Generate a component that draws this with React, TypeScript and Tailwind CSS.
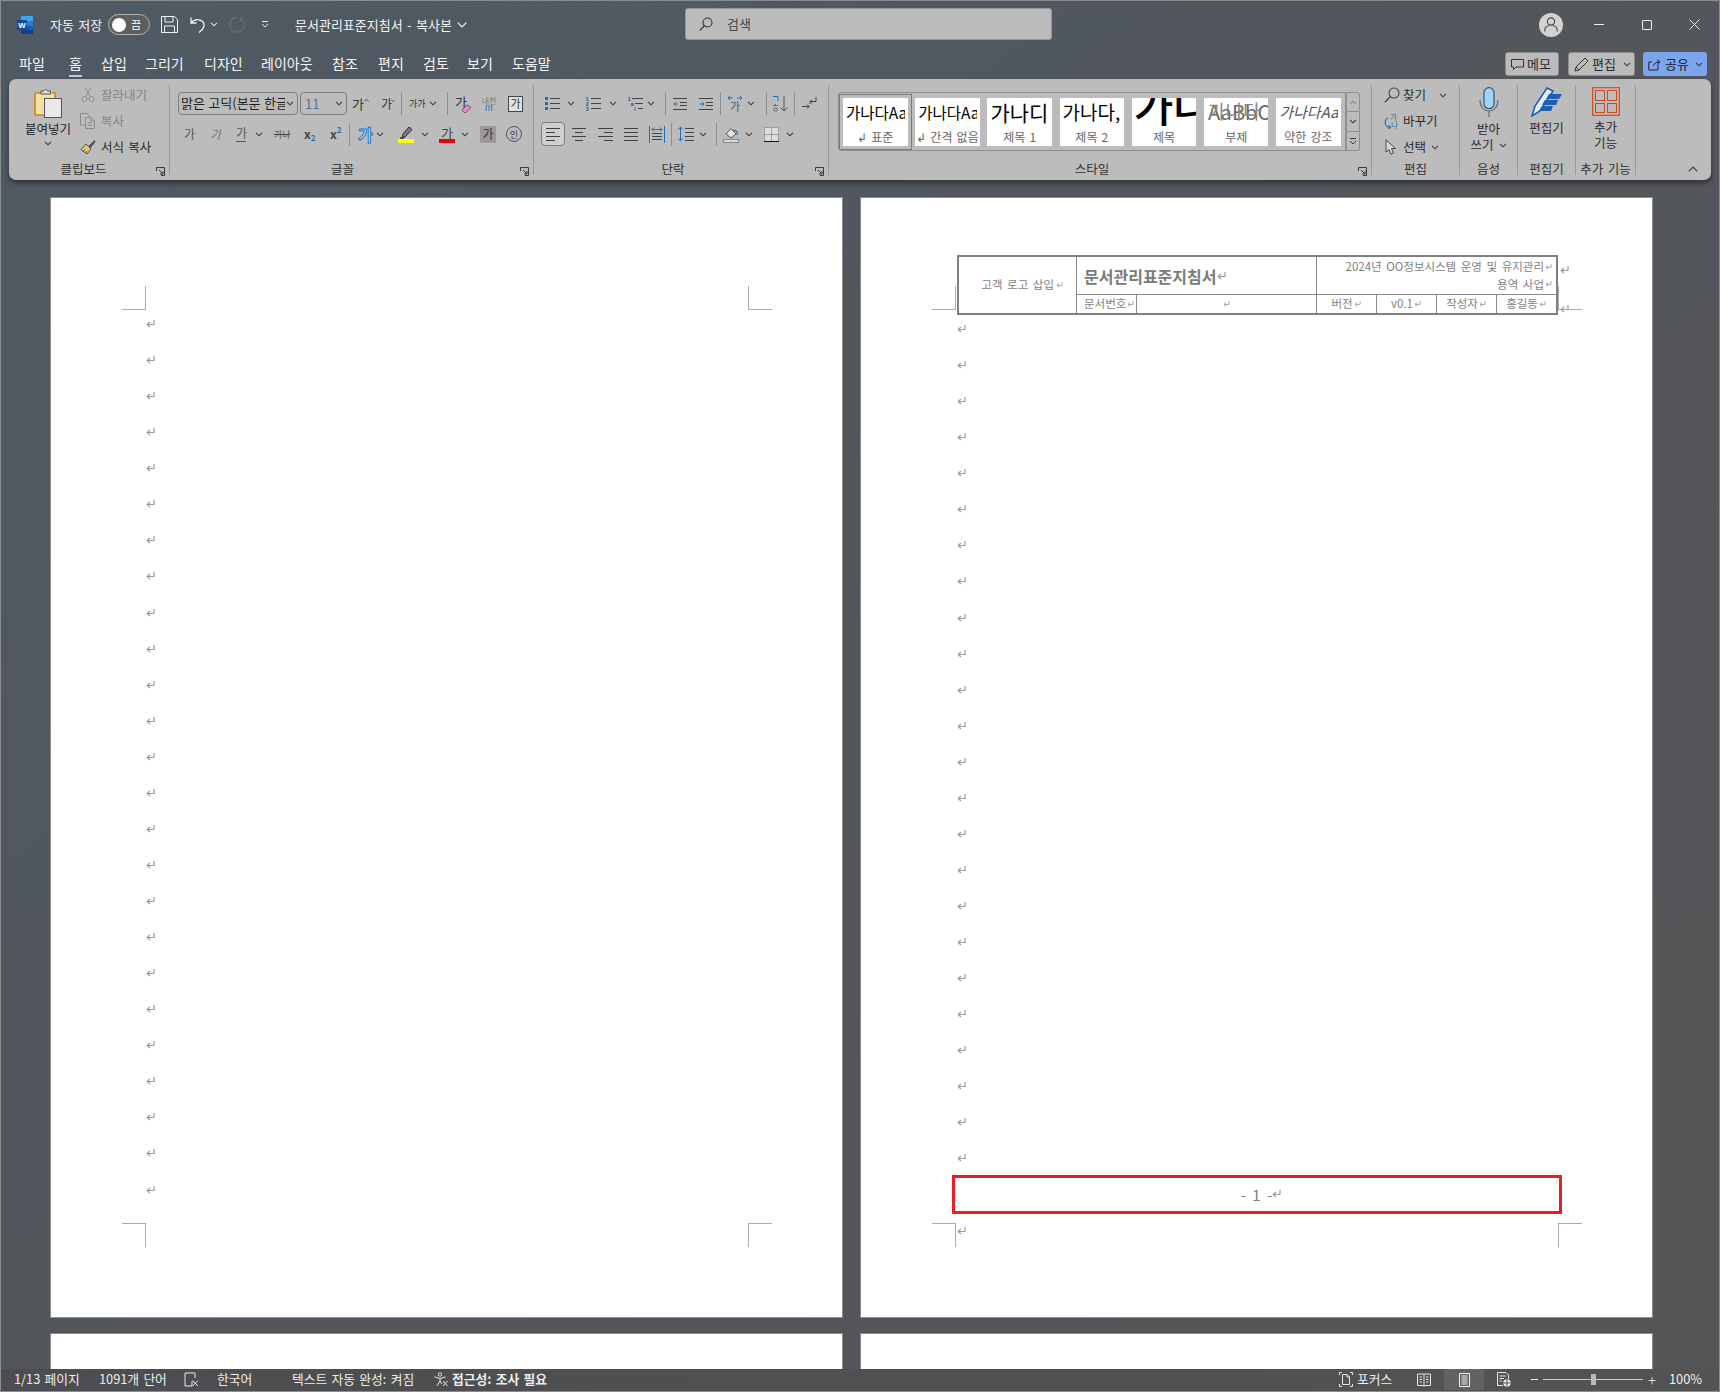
import React from "react";

type P = { c?: string };
const Svg = ({ w, h, c = "", children }: { w: number; h: number; c?: string; children: React.ReactNode }) => (
  <svg width={w} height={h} viewBox={`0 0 ${w} ${h}`} fill="none" className={`shrink-0 ${c}`}>{children}</svg>
);
const Chev = ({ c = "" }: P) => (
  <Svg w={8} h={5} c={c}><path d="M1 .8l3 3 3-3" stroke="#3a3a3a" strokeWidth="1.1" /></Svg>
);
const Sep = ({ c = "" }: P) => <div className={`w-px h-[23px] bg-[#8f8f8f] shrink-0 ${c}`} />;
const GSep = () => <div className="w-px h-[90px] self-center bg-[#999999] shrink-0" />;
const Launcher = () => (
  <svg width="9" height="9" viewBox="0 0 9 9" fill="none" className="absolute right-[4px] bottom-[4px]">
    <path d="M.5 4V.5H8.5V8.5H5M3 3l4 4M7 4v3H4" stroke="#3a3a3a" strokeWidth="1" />
  </svg>
);
const Mark = ({ c = "" }: P) => (
  <svg width="9" height="8" viewBox="0 0 9 8" fill="none" className={`shrink-0 ${c}`}>
    <path d="M8 0v4.5H1.5M4 2L1.2 4.5 4 7" stroke="#9c9c9c" strokeWidth="1.2" />
  </svg>
);
const Lines = ({ ys, w = 16, h = 16, col = "#3f3f3f", c = "" }: { ys: [number, number, number][]; w?: number; h?: number; col?: string; c?: string }) => (
  <Svg w={w} h={h} c={c}>
    {ys.map((y, i) => <path key={i} d={`M${y[1]} ${y[0] + 0.5}H${y[2]}`} stroke={col} />)}
  </Svg>
);

function TitleBar() {
  return (
    <div className="h-[49px] flex items-center text-[13px] text-[#f4f4f4] shrink-0">
      <svg width="16" height="18" viewBox="0 0 16 18" className="ml-[17px] shrink-0">
        <rect x="4" y="0" width="12" height="18" rx="1" fill="#41a5ee" />
        <rect x="4" y="5" width="12" height="4.5" fill="#2b7cd3" />
        <rect x="4" y="9.5" width="12" height="4.5" fill="#185abd" />
        <rect x="4" y="14" width="12" height="4" fill="#103f91" />
        <rect x="0" y="4" width="10" height="10" rx="1" fill="#134a9e" />
        <text x="5" y="12" textAnchor="middle" fontSize="8" fontWeight="700" fill="#fff" fontFamily="Liberation Sans">W</text>
      </svg>
      <div className="ml-[17px] w-[50px] whitespace-nowrap">자동 저장</div>
      <div className="ml-[8px] w-[42px] h-[21px] rounded-full border border-[#b4b4b4] bg-[#5e5e5e] flex items-center justify-between pl-[3px] pr-[8px] shrink-0">
        <div className="w-[14px] h-[14px] rounded-full bg-white" />
        <span className="text-[11px] leading-none text-white">끔</span>
      </div>
      <Svg w={17} h={17} c="ml-[11px]">
        <path d="M.5.5H13.5L16.5 3.5V16.5H.5z M4 .5V6H12V.5 M3.5 16.5V10H13.5V16.5" stroke="#f0f0f0" strokeWidth="1" />
      </Svg>
      <Svg w={16} h={17} c="ml-[12px]">
        <path d="M1 1.5V7H6.5 M1.2 6.5C4 3.5 9 2.5 12.5 5.5C15.5 8.5 14 13 9 16.5" stroke="#f0f0f0" strokeWidth="1.3" />
      </Svg>
      <svg width="8" height="5" viewBox="0 0 8 5" fill="none" className="ml-[4px] shrink-0"><path d="M1 .8l3 3 3-3" stroke="#e8e8e8" strokeWidth="1.1" /></svg>
      <Svg w={16} h={17} c="ml-[11px]">
        <path d="M8 1.5C3.5 1.5.8 5 .8 9a7.2 7.2 0 0 0 14.4 0C15.2 6 14 4 11.5 2.5M11.5 1v4" stroke="#6a6f74" strokeWidth="1.2" />
      </Svg>
      <svg width="8" height="7" viewBox="0 0 8 7" fill="none" className="ml-[16px] shrink-0"><path d="M1 .5h6M1 3l3 3 3-3" stroke="#e8e8e8" strokeWidth="1" /></svg>
      <div className="ml-[26px] w-[157px] whitespace-nowrap">문서관리표준지침서 - 복사본</div>
      <svg width="10" height="6" viewBox="0 0 10 6" fill="none" className="ml-[5px] shrink-0"><path d="M.7.7L5 5l4.3-4.3" stroke="#f0f0f0" strokeWidth="1.2" /></svg>
      <div className="ml-[218px] w-[367px] h-[32px] -mt-[2px] rounded-[3px] border border-[#969696] bg-[#bbbbbb] flex items-center pl-[13px] shrink-0">
        <Svg w={14} h={14}>
          <circle cx="8.5" cy="5.5" r="4.5" stroke="#333" strokeWidth="1.1" />
          <path d="M5.2 9L.7 13.4" stroke="#333" strokeWidth="1.2" />
        </Svg>
        <span className="ml-[14px] text-[13px] text-[#444444]">검색</span>
      </div>
      <div className="ml-[487px] w-[24px] h-[24px] rounded-full bg-[#d2d2d2] flex items-center justify-center shrink-0">
        <Svg w={14} h={15}>
          <circle cx="7" cy="4.5" r="3.6" stroke="#444" strokeWidth="1.1" />
          <path d="M.8 14.5V13C1 10.5 3 9 5 8.8M13.2 14.5V13C13 10.5 11 9 9 8.8" stroke="#444" strokeWidth="1.1" />
        </Svg>
      </div>
      <div className="ml-[31px] w-[10px] h-px bg-[#f0f0f0] shrink-0" />
      <div className="ml-[38px] w-[10px] h-[10px] border border-[#f0f0f0] rounded-[1px] shrink-0" />
      <Svg w={11} h={11} c="ml-[37px]"><path d="M.5.5l10 10M10.5.5l-10 10" stroke="#f0f0f0" /></Svg>
    </div>
  );
}

function Tabs() {
  const btn = "h-[24px] rounded-[3px] border border-[#8f8f8f] bg-[#bbbbbb] flex items-center text-[13px] text-[#2b2b2b] shrink-0";
  return (
    <div className="h-[30px] flex items-start pt-[4px] text-[14px] leading-[20px] text-[#f6f6f6] shrink-0">
      <span className="ml-[19px] w-[25px] whitespace-nowrap">파일</span>
      <span className="ml-[25px] h-[24px] border-b-2 border-[#b7cbee] w-[13px] whitespace-nowrap">홈</span>
      <span className="ml-[19px] w-[25px] whitespace-nowrap">삽입</span>
      <span className="ml-[19px] w-[39px] whitespace-nowrap">그리기</span>
      <span className="ml-[20px] w-[38px] whitespace-nowrap">디자인</span>
      <span className="ml-[19px] w-[52px] whitespace-nowrap">레이아웃</span>
      <span className="ml-[19px] w-[26px] whitespace-nowrap">참조</span>
      <span className="ml-[20px] w-[25px] whitespace-nowrap">편지</span>
      <span className="ml-[20px] w-[25px] whitespace-nowrap">검토</span>
      <span className="ml-[19px] w-[25px] whitespace-nowrap">보기</span>
      <span className="ml-[20px] w-[38px] whitespace-nowrap">도움말</span>
      <div className={`ml-[955px] -mt-[1px] w-[54px] pl-[5px] ${btn}`}>
        <Svg w={13} h={13}><path d="M.5 1.5H12.5V9H5L2.5 11.5V9H.5z" stroke="#333" /></Svg>
        <span className="ml-[3px]">메모</span>
      </div>
      <div className={`ml-[9px] -mt-[1px] w-[67px] pl-[5px] ${btn}`}>
        <Svg w={15} h={15}><path d="M1 14l1-4L11 1l3 3-9 9zM2 10l3 3" stroke="#333" /></Svg>
        <span className="ml-[3px]">편집</span>
        <Chev c="ml-[7px]" />
      </div>
      <div className="ml-[8px] -mt-[1px] w-[64px] h-[24px] rounded-[3px] bg-[#7ba6ee] flex items-center pl-[5px] text-[13px] text-[#1c1c1c] shrink-0">
        <Svg w={13} h={13}><path d="M10 6.5V12H.8V4H4M5.5 8C6 5.5 8 4 11 4M9 1.5L12 4 9 6.5" stroke="#222" /></Svg>
        <span className="ml-[4px]">공유</span>
        <Chev c="ml-[6px]" />
      </div>
    </div>
  );
}

const SmallRow = ({ icon, text, dim, after }: { icon: React.ReactNode; text: string; dim?: boolean; after?: React.ReactNode }) => (
  <div className="h-[26px] flex items-center">
    {icon}
    <span className={`whitespace-nowrap ${dim ? "text-[#858585]" : "text-[#2b2b2b]"}`}>{text}</span>
    {after}
  </div>
);

function Group({ w, label, launcher, lp = "", children }: { w: string; label: string; launcher?: boolean; lp?: string; children: React.ReactNode }) {
  return (
    <div className={`relative flex flex-col shrink-0 ${w}`}>
      <div className="h-[81px]">{children}</div>
      <div className={`h-[18px] flex items-center justify-center text-[12.5px] leading-none text-[#303030] whitespace-nowrap ${lp}`}>{label}</div>
      {launcher && <Launcher />}
    </div>
  );
}

function Clipboard() {
  return (
    <div className="flex">
      <div className="w-[71px] pl-[7px] flex flex-col items-center">
        <svg width="28" height="30" viewBox="0 0 28 30" fill="none" className="mt-[9px] shrink-0">
          <path d="M1 5H8M18 5H21V27H1V5" stroke="#c98a17" strokeWidth="1.6" fill="#f6dfa6" />
          <path d="M7 6V3H10C10.5 1 13 1 13.5 3H16.5V6z" fill="#dfdfdf" stroke="#555" />
          <rect x="10.5" y="10.5" width="17" height="19" fill="#e9e9e9" stroke="#555" />
        </svg>
        <div className="mt-[3px] h-[16px] leading-[16px] whitespace-nowrap text-[#222222]">붙여넣기</div>
        <Chev c="mt-[4px]" />
      </div>
      <div className="pt-[3px]">
        <SmallRow dim text="잘라내기" icon={
          <Svg w={16} h={16} c="mr-[5px]">
            <path d="M5 .5L10 9M11 .5L6 9" stroke="#8c8c8c" />
            <circle cx="4.5" cy="12" r="2.5" stroke="#8c8c8c" /><circle cx="11.5" cy="12" r="2.5" stroke="#8c8c8c" />
          </Svg>} />
        <SmallRow dim text="복사" icon={
          <Svg w={16} h={16} c="mr-[5px]">
            <path d="M.5.5H7L9 3V4M.5.5V12H5M5.5 4.5H11L14.5 8V15.5H5.5zM11 4.5V8H14.5M7.5 10H12M7.5 12.5H12" stroke="#8c8c8c" />
          </Svg>} />
        <SmallRow text="서식 복사" icon={
          <Svg w={16} h={16} c="mr-[5px]">
            <path d="M9 7L14.5 1.5L15 3L10.5 8.5z" fill="#555" stroke="#333" strokeWidth=".6" />
            <path d="M6 5L11 10L7 15L1 10.5z" fill="#e8c56d" stroke="#555" />
            <path d="M3 12.5l2-2M5.5 14l1.5-2" stroke="#555" />
          </Svg>} />
      </div>
    </div>
  );
}

function FontGroup() {
  return (
    <div className="pt-[13px] text-[#333333]">
      <div className="h-[23px] flex items-center">
        <div className="ml-[8px] w-[120px] h-[23px] rounded-[4px] border border-[#7d7d7d] flex items-center pl-[2px] pr-[3px] pb-[2px] shrink-0">
          <span className="flex-1 overflow-hidden whitespace-nowrap text-[13px] leading-[16px] text-[#1f1f1f] [word-spacing:0.5px]">맑은 고딕(본문 한글</span>
          <Chev c="ml-[1px] mt-[2px]" />
        </div>
        <div className="ml-[2px] w-[47px] h-[23px] rounded-[4px] border border-[#7d7d7d] flex items-center justify-between pl-[4px] pr-[3px] shrink-0">
          <span className="text-[13px] leading-none text-[#55748f]">11</span>
          <Chev />
        </div>
        <div className="ml-[5px] w-[17px] flex items-start shrink-0 text-[13px] leading-none">
          가<svg width="5" height="4" viewBox="0 0 5 4" fill="none" className="mt-px"><path d="M.5 3.5l2-2.5 2 2.5" stroke="#1f6fb5" /></svg>
        </div>
        <div className="ml-[12px] w-[14px] flex items-start shrink-0 text-[12px] leading-none">
          가<svg width="5" height="4" viewBox="0 0 5 4" fill="none" className="mt-px -ml-[1px]"><path d="M.5.5l2 2.5 2-2.5" stroke="#1f6fb5" /></svg>
        </div>
        <Sep c="ml-[6px]" />
        <div className="ml-[7px] w-[16px] text-[9px] leading-none whitespace-nowrap shrink-0">가가</div>
        <Chev c="ml-[4px]" />
        <Sep c="ml-[10px]" />
        <div className="ml-[7px] w-[17px] h-[18px] relative shrink-0 text-[13px] leading-none">
          가
          <svg width="11" height="9" viewBox="0 0 11 9" className="absolute right-0 bottom-0"><path d="M1 6L6 1L10 3.5L5 8.5H3z" fill="#e28fc2" stroke="#a23d83" /></svg>
        </div>
        <div className="ml-[9px] w-[16px] shrink-0 flex flex-col items-center text-[8px] leading-[9px] text-[#777777]">
          <span className="whitespace-nowrap">내천</span>
          <svg width="8" height="7" viewBox="0 0 8 7"><path d="M1.5 0L1 6M4 0v6M6.5 0L7 6" stroke="#2b78c2" /></svg>
        </div>
        <div className="ml-[11px] w-[15px] h-[16px] border border-[#444444] flex items-center justify-center text-[11px] leading-none bg-[#e2e2e2] shrink-0">가</div>
      </div>
      <div className="mt-[7px] h-[24px] flex items-center text-[12px] leading-none text-[#555555]">
        <span className="ml-[14px] w-[10px] shrink-0">가</span>
        <span className="ml-[16px] w-[9px] shrink-0 text-[#777777] italic">가</span>
        <span className="ml-[17px] w-[10px] shrink-0 border-b border-[#555555] pb-[2px]">가</span>
        <Chev c="ml-[9px]" />
        <span className="ml-[11px] w-[16px] shrink-0 text-[9px] relative whitespace-nowrap">
          가나
          <span className="absolute left-0 right-0 top-[4px] h-px bg-[#444444]" />
        </span>
        <span className="ml-[14px] w-[12px] shrink-0 font-bold text-[#444444] text-[12px] flex items-end">x<span className="text-[8px] text-[#1f6fb5] -mb-[2px]">2</span></span>
        <span className="ml-[14px] w-[11px] shrink-0 font-bold text-[#444444] text-[12px] flex items-start">x<span className="text-[8px] text-[#1f6fb5] -mt-[2px]">2</span></span>
        <Sep c="ml-[8px]" />
        <span className="ml-[8px] w-[14px] shrink-0 text-[16px] font-bold text-[#dbeaf8] [-webkit-text-stroke:1px_#1f6fb5]">가</span>
        <Chev c="ml-[4px]" />
        <div className="ml-[14px] w-[16px] shrink-0 flex flex-col items-center">
          <svg width="14" height="13" viewBox="0 0 14 13" fill="none"><path d="M10 1L13 3.5L6 11H3.5V8.5z" fill="#777777" stroke="#333" /><path d="M1 12H5" stroke="#222" strokeWidth="1.4" /></svg>
          <div className="w-[16px] h-[4px] bg-[#ffff00]" />
        </div>
        <Chev c="ml-[7px]" />
        <div className="ml-[10px] w-[16px] shrink-0 flex flex-col items-center">
          <span className="text-[13px] text-[#444444] h-[13px]">가</span>
          <div className="w-[16px] h-[4px] bg-[#f00000]" />
        </div>
        <Chev c="ml-[6px]" />
        <div className="ml-[11px] w-[16px] h-[17px] bg-[#999999] flex items-center justify-center text-[12px] text-[#333333] shrink-0">가</div>
        <div className="ml-[10px] w-[16px] h-[16px] rounded-full border border-[#555555] flex items-center justify-center text-[9px] text-[#444444] shrink-0">인</div>
      </div>
    </div>
  );
}

const sq = "#1f6fb5";
const dig = { fontSize: 6, fontWeight: 700, fill: "#1a5f9e", fontFamily: "Liberation Sans" };
function ParaGroup() {
  return (
    <div className="pt-[13px]">
      <div className="h-[23px] flex items-center">
        <Svg w={15} h={15} c="ml-[11px]">
          <rect y="1" width="3" height="3" fill={sq} /><rect y="6" width="3" height="3" fill={sq} /><rect y="11" width="3" height="3" fill={sq} />
          <path d="M5 2.5H15M5 7.5H15M5 12.5H15" stroke="#444" />
        </Svg>
        <Chev c="ml-[7px]" />
        <svg width="16" height="15" viewBox="0 0 16 15" fill="none" className="ml-[10px] shrink-0">
          <path d="M6 2.5H16M6 7.5H16M6 12.5H16" stroke="#444" />
          <text x="0.5" y="5" {...dig}>1</text><text x="0.5" y="10" {...dig}>2</text><text x="0.5" y="15" {...dig}>3</text>
        </svg>
        <Chev c="ml-[8px]" />
        <svg width="16" height="15" viewBox="0 0 16 15" fill="none" className="ml-[10px] shrink-0">
          <path d="M5 2.5H16M8 7.5H16M11 12.5H16" stroke="#444" />
          <text x="0.5" y="5" {...dig}>1</text><text x="3.5" y="10" {...dig}>a</text><text x="7" y="15" {...dig}>i</text>
        </svg>
        <Chev c="ml-[4px]" />
        <Sep c="ml-[10px]" />
        <Svg w={14} h={15} c="ml-[7px]">
          <path d="M0 2.5H14M7 6.5H14M7 9.5H14M0 13.5H14" stroke="#444" />
          <path d="M5 8H.8M3 6L.8 8 3 10" stroke={sq} />
        </Svg>
        <Svg w={14} h={15} c="ml-[12px]">
          <path d="M0 2.5H14M7 6.5H14M7 9.5H14M0 13.5H14" stroke="#444" />
          <path d="M.5 8H5M3 6L5.2 8 3 10" stroke={sq} />
        </Svg>
        <Sep c="ml-[7px]" />
        <div className="ml-[6px] w-[16px] flex flex-col items-center shrink-0">
          <svg width="16" height="6" viewBox="0 0 16 6" fill="none"><path d="M6 3H1M3 1L1 3l2 2M10 3h5M13 1l2 2-2 2" stroke={sq} /></svg>
          <span className="text-[11px] leading-[11px] text-[#555555]">가</span>
        </div>
        <Chev c="ml-[4px]" />
        <Sep c="ml-[11px]" />
        <svg width="17" height="17" viewBox="0 0 17 17" fill="none" className="ml-[5px] shrink-0">
          <path d="M1 1.5H6V6" stroke={sq} />
          <path d="M1 10.5H6M3.5 9V11M1.5 14.5a2 1.6 0 1 0 4 0a2 1.6 0 1 0-4 0" stroke="#555" strokeWidth=".8" />
          <path d="M12 1V16M8.5 12.5L12 16l3.5-3.5" stroke="#555" />
        </svg>
        <Sep c="ml-[5px]" />
        <Svg w={16} h={16} c="ml-[6px]">
          <path d="M15 1V5.5H9M11 3.5L9 5.5l2 2" stroke="#444" />
          <path d="M1 10.5H8M6 8.5l2 2-2 2M8 8l3-3" stroke="#444" />
        </Svg>
      </div>
      <div className="mt-[7px] h-[24px] flex items-center">
        <div className="ml-[7px] w-[24px] h-[24px] rounded-[4px] border border-[#7f7f7f] bg-[#d0d0d0] flex items-center justify-center shrink-0">
          <Lines ys={[[1, 0, 14], [5, 0, 9], [9, 0, 14], [13, 0, 9]]} w={14} h={15} />
        </div>
        <Lines c="ml-[7px]" ys={[[1, 0, 14], [5, 3, 11], [9, 0, 14], [13, 3, 11]]} w={14} h={15} />
        <Lines c="ml-[12px]" ys={[[1, 0, 15], [5, 6, 15], [9, 0, 15], [13, 6, 15]]} w={15} h={15} />
        <Lines c="ml-[11px]" ys={[[1, 0, 14], [5, 0, 14], [9, 0, 14], [13, 0, 14]]} w={14} h={15} />
        <Svg w={16} h={17} c="ml-[11px]">
          <path d="M.5 0V17M15.5 0V17" stroke={sq} />
          <path d="M3 3.5H13M5 1.5L3 3.5l2 2M11 1.5l2 2-2 2" stroke={sq} />
          <path d="M3 7.5H13M3 10.5H13M3 13.5H13" stroke="#444" />
        </Svg>
        <Sep c="ml-[6px]" />
        <Svg w={16} h={16} c="ml-[6px]">
          <path d="M7 2.5H16M7 6.5H16M7 10.5H16M7 14.5H16" stroke="#444" />
          <path d="M2.5 1V15M.5 3.5l2-2.5 2 2.5M.5 12.5l2 2.5 2-2.5" stroke={sq} />
        </Svg>
        <Chev c="ml-[5px]" />
        <Sep c="ml-[9px]" />
        <Svg w={16} h={17} c="ml-[6px]">
          <path d="M3 8L8 2.5L13 8L8 12z" stroke="#555" fill="#e4e4e4" />
          <path d="M10 5a2.5 2.5 0 0 1 4 1c.6 1.5.3 2 0 3" stroke={sq} strokeWidth="1.2" />
          <rect x=".5" y="13.5" width="15" height="3" fill="#dadada" stroke="#8a8a8a" />
        </Svg>
        <Chev c="ml-[6px]" />
        <Svg w={15} h={15} c="ml-[11px]">
          <rect width="15" height="14" fill="#dcdcdc" />
          <path d="M.5.5H14.5M.5.5V14M14.5.5V14M7.5.5V14M.5 7.5H14.5" stroke="#666" strokeDasharray="1 1" />
          <path d="M0 14.5H15" stroke="#111" />
        </Svg>
        <Chev c="ml-[7px]" />
      </div>
    </div>
  );
}

function Tile({ label, first, children }: { label: string; first?: boolean; children: React.ReactNode }) {
  return (
    <div className={`w-[64.5px] h-[48px] bg-white flex flex-col overflow-hidden shrink-0 ${first ? "outline-1 outline-offset-[3px] outline-[#7a7a7a]" : ""}`}>
      <div className="h-[28px] relative overflow-hidden flex items-center">{children}</div>
      <div className="h-[20px] pt-[3px] flex items-center justify-center text-[12px] leading-none text-[#666666] whitespace-nowrap">{label}</div>
    </div>
  );
}
const sampleBox = "block w-[59px] ml-[3px] overflow-hidden whitespace-nowrap";
const styleBtn = "w-[14px] border border-[#8f8f8f] flex items-center justify-center";
function Styles() {
  return (
    <div className="ml-[9px] mt-[13px] flex h-[59px] w-[522px]">
      <div className="w-[508px] h-full rounded-l-[3px] border border-[#8f8f8f] flex gap-[7.7px] items-center pl-[4px] overflow-hidden">
        <Tile first label="↲ 표준"><span className={`${sampleBox} text-[15.5px] leading-[18px] text-black`}>가나다AaBb</span></Tile>
        <Tile label="↲ 간격 없음"><span className={`${sampleBox} text-[15.5px] leading-[18px] text-black`}>가나다AaBb</span></Tile>
        <Tile label="제목 1"><span className={`${sampleBox} text-[21px] leading-[24px] text-black`}>가나디</span></Tile>
        <Tile label="제목 2"><span className={`${sampleBox} text-[19px] leading-[22px] text-black`}>가나다,</span></Tile>
        <Tile label="제목"><span className="pl-[2px] text-[43px] leading-none text-black whitespace-nowrap -mt-[14px] font-medium">가나다</span></Tile>
        <Tile label="부제">
          <span className="pl-[4px] text-[20px] leading-none text-[#666666] whitespace-nowrap">AaBbC</span>
          <span className="absolute left-[4px] top-[3px] text-[19px] leading-none text-[#888888] whitespace-nowrap">가나다</span>
        </Tile>
        <Tile label="약한 강조"><span className={`${sampleBox} text-[15px] leading-[18px] italic text-[#555555]`}>가나다AaBb</span></Tile>
      </div>
      <div className="w-[14px] h-full flex flex-col shrink-0">
        <div className={`${styleBtn} h-[20px] rounded-tr-[3px]`}>
          <svg width="8" height="5" viewBox="0 0 8 5" fill="none"><path d="M1 4.2l3-3 3 3" stroke="#8c8c8c" strokeWidth="1.1" /></svg>
        </div>
        <div className={`${styleBtn} h-[20px] border-t-0`}><Chev /></div>
        <div className={`${styleBtn} h-[19px] border-t-0 rounded-br-[3px]`}>
          <svg width="8" height="7" viewBox="0 0 8 7" fill="none"><path d="M1 .5h6M1 3l3 3 3-3" stroke="#3a3a3a" strokeWidth="1" /></svg>
        </div>
      </div>
    </div>
  );
}

function Editing() {
  return (
    <div className="pt-[3px] pl-[12px]">
      <SmallRow text="찾기" after={<Chev c="ml-[13px]" />} icon={
        <Svg w={16} h={16} c="mr-[3px]">
          <circle cx="10" cy="6" r="5" stroke="#444" strokeWidth="1.1" />
          <path d="M6.5 9.5L.8 15.2" stroke="#444" strokeWidth="1.3" />
        </Svg>} />
      <SmallRow text="바꾸기" icon={
        <svg width="16" height="16" viewBox="0 0 16 16" fill="none" className="mr-[3px] shrink-0">
          <text x="6" y="7" fontSize="7.5" fill="#666" fontFamily="Noto Sans CJK KR">가</text>
          <text x="7" y="15" fontSize="7.5" fill="#1f6fb5" fontFamily="Noto Sans CJK KR">나</text>
          <path d="M4 5C1 6 .5 10 2 12.5C3 14 5 14.5 6.5 14.5M4.5 12.5l2 2-2 1.5" stroke="#1f6fb5" strokeWidth="1.1" />
        </svg>} />
      <SmallRow text="선택" after={<Chev c="ml-[5px]" />} icon={
        <Svg w={16} h={16} c="mr-[3px]">
          <path d="M2 .8V13L5 10.5L7 15.2L9.5 14L7.5 9.5H11.5z" stroke="#444" fill="#d8d8d8" />
        </Svg>} />
    </div>
  );
}

function BigCol({ icon, lines, chev, gap = "mt-[3px]" }: { icon: React.ReactNode; lines: string[]; chev?: boolean; gap?: string }) {
  return (
    <div className="flex flex-col items-center pt-[8px] text-[#2b2b2b]">
      {icon}
      <div className={`${gap} text-center text-[12.5px] leading-[16px] whitespace-nowrap`}>
        {lines.map((l, i) => (
          <div key={i} className="flex items-center justify-center">{l}{chev && i === lines.length - 1 && <Chev c="ml-[5px]" />}</div>
        ))}
      </div>
    </div>
  );
}

function Ribbon() {
  return (
    <div className="relative z-10 ml-[9px] w-[1702px] h-[101px] rounded-[7px] bg-[#bcbcbc] flex items-stretch text-[12.5px] leading-[16px] text-[#2b2b2b] shadow-[0_3px_5px_rgba(0,0,0,0.45)] shrink-0">
      <Group w="w-[160px]" label="클립보드" launcher lp="pr-[11px]"><Clipboard /></Group>
      <GSep />
      <Group w="w-[363px]" label="글꼴" launcher lp="pr-[18px]"><FontGroup /></Group>
      <GSep />
      <Group w="w-[294px]" label="단락" launcher lp="pr-[16px]"><ParaGroup /></Group>
      <GSep />
      <Group w="w-[542px]" label="스타일" launcher lp="pr-[16px]"><Styles /></Group>
      <GSep />
      <Group w="w-[87px]" label="편집"><Editing /></Group>
      <GSep />
      <Group w="w-[57px]" label="음성">
        <BigCol chev gap="mt-[4px]" lines={["받아", "쓰기"]} icon={
          <svg width="20" height="30" viewBox="0 0 20 30" fill="none" className="shrink-0">
            <rect x="5" y=".7" width="10" height="21" rx="5" fill="#a7d3f2" stroke="#245a87" strokeWidth="1.2" />
            <path d="M1 13C1 19 4 24 10 24C16 24 19 19 19 13M10 24V30" stroke="#6a6a6a" strokeWidth="1.2" />
          </svg>} />
      </Group>
      <GSep />
      <Group w="w-[57px]" label="편집기">
        <BigCol lines={["편집기"]} icon={
          <svg width="32" height="30" viewBox="0 0 32 30" fill="none" className="shrink-0">
            <path d="M1 29L4 19L16 1L22 4L9 24z" fill="#e6eaf0" stroke="#1a5fb4" strokeWidth="1.6" />
            <path d="M18 7H31L28 12H15zM14 13H27L25 18H11zM11 19H22L20 24H8z" fill="#1a5fb4" />
          </svg>} />
      </Group>
      <GSep />
      <Group w="w-[59px]" label="추가 기능">
        <BigCol lines={["추가", "기능"]} icon={
          <svg width="28" height="29" viewBox="0 0 28 29" fill="none" className="shrink-0">
            <rect x=".7" y=".7" width="26.6" height="27.6" stroke="#cf4a1b" strokeWidth="1.2" />
            <rect x="3.5" y="3.5" width="9" height="10" stroke="#cf4a1b" /><rect x="15.5" y="3.5" width="9" height="10" stroke="#cf4a1b" />
            <rect x="3.5" y="16.5" width="9" height="9" stroke="#cf4a1b" /><rect x="15.5" y="16.5" width="9" height="9" stroke="#cf4a1b" />
          </svg>} />
      </Group>
      <GSep />
      <div className="flex-1 flex items-end justify-end pb-[8px] pr-[13px]">
        <svg width="10" height="6" viewBox="0 0 10 6" fill="none"><path d="M.7 5.3L5 1l4.3 4.3" stroke="#3a3a3a" strokeWidth="1.1" /></svg>
      </div>
    </div>
  );
}

const Marks = ({ n }: { n: number }) => (
  <>
    {Array.from({ length: n }).map((_, i) => (
      <div key={i} className="h-[36.07px] flex items-center"><Mark /></div>
    ))}
  </>
);

const crop = "absolute w-[24px] h-[24px] border-[#adadad]";
function Crops() {
  return (
    <>
      <div className={`${crop} left-[71px] top-[88px] border-r border-b`} />
      <div className={`${crop} left-[697px] top-[88px] border-l border-b`} />
      <div className={`${crop} left-[71px] top-[1025px] border-r border-t`} />
      <div className={`${crop} left-[697px] top-[1025px] border-l border-t`} />
    </>
  );
}

const cell = "flex items-center border-[#8a8a8a] whitespace-nowrap overflow-hidden";
function HeaderTable() {
  return (
    <div className="relative w-[601px] border-2 border-[#808080] grid grid-cols-[118px_60px_180px_60px_60px_60px_59px] grid-rows-[37px_19px] text-[11.5px] leading-none text-[#7f7f7f] [word-spacing:2px]">
      <div className={`${cell} row-span-2 border-r justify-end pr-[12px]`}>고객 로고 삽입<Mark c="ml-px scale-75" /></div>
      <div className={`${cell} col-span-2 border-r pl-[7px] text-[16px] font-semibold text-[#7a7a7a]`}>문서관리표준지침서<Mark c="ml-px" /></div>
      <div className="col-span-4 flex flex-col items-end justify-center pr-[3px] gap-[6px] whitespace-nowrap">
        <div className="flex items-center">2024년 OO정보시스템 운영 및 유지관리<Mark c="scale-75" /></div>
        <div className="flex items-center">용역 사업<Mark c="scale-75" /></div>
      </div>
      <div className={`${cell} border-t border-r pl-[7px]`}>문서번호<Mark c="scale-75" /></div>
      <div className={`${cell} border-t border-r justify-center`}><Mark c="scale-75" /></div>
      <div className={`${cell} border-t border-r justify-center`}>버전<Mark c="scale-75" /></div>
      <div className={`${cell} border-t border-r justify-center`}>v0.1<Mark c="scale-75" /></div>
      <div className={`${cell} border-t border-r justify-center`}>작성자<Mark c="scale-75" /></div>
      <div className={`${cell} border-t justify-center`}>홍길동<Mark c="scale-75" /></div>
      <Mark c="absolute left-[601px] top-[9px]" />
      <Mark c="absolute left-[601px] top-[48px]" />
    </div>
  );
}

function Document() {
  const page = "relative w-[793px] h-[1121px] bg-white border border-[#8c8c8c]";
  return (
    <div className="flex-1 min-h-0 overflow-hidden pt-[17px] pl-[50px]">
      <div className="grid grid-cols-[793px_793px] gap-x-[17px] gap-y-[15px]">
        <div className={`${page} pl-[95px] pt-[108px]`}>
          <Crops />
          <Marks n={25} />
        </div>
        <div className={page}>
          <Crops />
          <div className="pl-[96px] pt-[57px]">
            <HeaderTable />
            <div className="-mt-[4px]"><Marks n={24} /></div>
            <div className="-mt-[2px] -ml-[5px] w-[610px] h-[39px] pl-[8px] border-[3px] border-[#ed1c24] flex items-center justify-center text-[15px] leading-none text-[#808080] whitespace-nowrap [word-spacing:3px]">
              - 1 -<Mark />
            </div>
            <div className="-mt-px"><Marks n={1} /></div>
          </div>
        </div>
        <div className={page} />
        <div className={page} />
      </div>
    </div>
  );
}

function StatusBar() {
  return (
    <div className="relative h-[23px] shrink-0 pb-[2px] bg-gradient-to-r from-[#4c4d50] to-[#535353] flex items-center text-[12.75px] leading-none text-[#eeeeee] whitespace-nowrap">
      <span className="ml-[14px] w-[64px]">1/13 페이지</span>
      <span className="ml-[21px] w-[66px]">1091개 단어</span>
      <Svg w={15} h={15} c="ml-[19px]">
        <path d="M8 1H1V14H8M8 1H11V6M8 14V9M8.5 8.5L14 14M14 8.5L8.5 14" stroke="#e8e8e8" />
      </Svg>
      <span className="ml-[18px] w-[36px]">한국어</span>
      <span className="ml-[39px] w-[121px]">텍스트 자동 완성: 켜짐</span>
      <Svg w={14} h={15} c="ml-[21px]">
        <circle cx="6" cy="2.5" r="1.7" stroke="#e8e8e8" />
        <path d="M.5 5L6 6.5 11.5 5M6 6.5V9L3 14M6 9L8 12M9 9l4.5 5M13.5 9L9 14" stroke="#e8e8e8" />
      </Svg>
      <span className="ml-[4px] w-[96px] font-bold">접근성: 조사 필요</span>
      <Svg w={14} h={15} c="ml-[791px]">
        <path d="M.5 3V.5H3M.5 12V14.5H3M11 .5H13.5V3M11 14.5H13.5V12M3.5 2.5H8L10.5 5V12.5H3.5zM8 2.5V5H10.5" stroke="#e8e8e8" />
      </Svg>
      <span className="ml-[4px] w-[35px]">포커스</span>
      <Svg w={14} h={14} c="ml-[25px]">
        <path d="M.5 1H6.5L7 2L7.5 1H13.5V12.5H7.5L7 13.5L6.5 12.5H.5zM7 2V13M2.5 4H5M2.5 6.5H5M2.5 9H5M9 4H11.5M9 6.5H11.5M9 9H11.5" stroke="#e8e8e8" />
      </Svg>
      <div className="ml-[13px] w-[40px] h-[21px] bg-[#626262] flex items-center justify-center shrink-0">
        <Svg w={11} h={14}>
          <path d="M.5.5H10.5V13.5H.5zM2.5 3H8.5M2.5 5H8.5M2.5 7H8.5M2.5 9H8.5M2.5 11H8.5" stroke="#f0f0f0" />
        </Svg>
      </div>
      <Svg w={14} h={15} c="ml-[13px]">
        <path d="M9 .5H.5V13.5H6M9 .5L11.5 3V7M2.5 4H9M2.5 6.5H7M2.5 9H5" stroke="#e8e8e8" />
        <circle cx="10" cy="11" r="3.7" fill="#e8e8e8" />
        <path d="M6.5 11H13.5M10 7.5V14.5" stroke="#555" />
      </Svg>
      <div className="ml-[20px] w-[7px] h-px bg-[#eeeeee]" />
      <div className="ml-[5px] w-[100px] h-px bg-[#c8c8c8] relative">
        <div className="absolute left-[48px] -top-[5px] w-[5px] h-[11px] bg-[#b9b9b9]" />
      </div>
      <span className="ml-[5px] w-[8px] text-[15px] font-light">+</span>
      <span className="ml-[13px]">100%</span>
      <div className="absolute left-0 right-0 bottom-0 h-px bg-[#8c8c8c]" />
    </div>
  );
}

export default function App() {
  return (
    <div className="relative w-[1720px] h-[1392px] flex flex-col overflow-hidden bg-gradient-to-br from-[#4f5a64] via-[#53565b] to-[#545556] font-['Noto_Sans_CJK_KR','Noto_Sans',sans-serif] [word-spacing:1.5px]">
      <TitleBar />
      <Tabs />
      <Ribbon />
      <Document />
      <StatusBar />
      <div className="pointer-events-none absolute inset-0 border border-[#8c8c8c]" />
    </div>
  );
}
